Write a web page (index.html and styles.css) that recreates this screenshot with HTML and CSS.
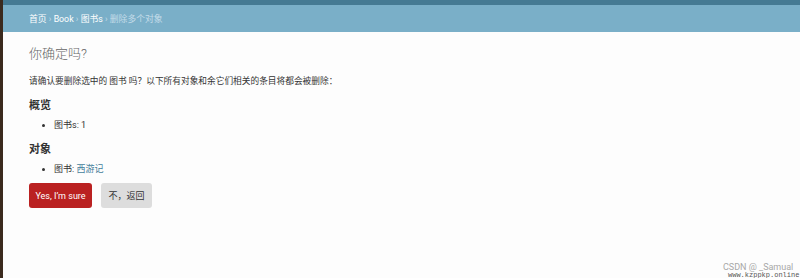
FILE: index.html
```html
<!DOCTYPE html>
<html lang="zh-CN">

<head>
    <meta charset="UTF-8">
    <meta name="viewport" content="width=device-width, initial-scale=1.0">
    <title>你确定吗?</title>
    <link rel="stylesheet" href="styles.css">
</head>

<body>
    <div class="page">
        <div class="edge"></div>
        <div class="main">
            <div class="header"></div>
            <div class="breadcrumbs">
                <a href="#">首页</a> › <a href="#">Book</a> › <a href="#">图书s</a> › <span class="current">删除多个对象</span>
            </div>
            <div class="content">
                <h1>你确定吗?</h1>
                <p class="intro">请确认要删除选中的 图书 吗？以下所有对象和余它们相关的条目将都会被删除：</p>
                <h2>概览</h2>
                <ul>
                    <li>图书s: 1</li>
                </ul>
                <h2>对象</h2>
                <ul>
                    <li>图书: <a href="#">西游记</a></li>
                </ul>
                <div class="actions">
                    <button class="btn-sure">Yes, I’m sure</button>
                    <button class="btn-back">不，返回</button>
                </div>
            </div>
        </div>
        <div class="watermark">
            <span class="wm-csdn">CSDN @ _Samual</span>
            <span class="wm-site">www.kzppkp.online</span>
        </div>
    </div>
</body>

</html>
```

FILE: styles.css
```css
body {
    margin: 0;
    font-family: Roboto, "Noto Sans CJK SC", sans-serif;
    background-color: #fdfdfd;
    color: #333;
}

.page {
    display: flex;
    height: 278px;
    overflow: hidden;
}

.edge {
    width: 3px;
    background-color: #3b2a1e;
}

.main {
    flex: 1;
    display: flex;
    flex-direction: column;
}

.header {
    height: 5px;
    background-color: #457a93;
}

.breadcrumbs {
    height: 27px;
    box-sizing: border-box;
    padding: 8px 26px 0;
    background-color: #7aafc8;
    color: #c4dce8;
    font-size: 8.8px;
    line-height: 12px;
}

.breadcrumbs a {
    color: #fff;
    text-decoration: none;
}

.breadcrumbs .current {
    color: #c4dce8;
}

.content {
    padding: 14px 26px 0;
}

.content h1 {
    margin: 0;
    font-size: 13px;
    line-height: 16px;
    font-weight: 300;
    color: #666;
}

.intro {
    margin: 13px 0 0;
    font-size: 8.7px;
    line-height: 12px;
}

.content h2 {
    margin: 12px 0 0;
    font-size: 11px;
    line-height: 14px;
    font-weight: bold;
    color: #333;
}

.content ul {
    margin: 6px 0 0;
    padding-left: 25px;
    font-size: 9px;
    line-height: 12px;
}

.content ul a {
    color: #447e9b;
    text-decoration: none;
}

.actions {
    display: flex;
    gap: 9px;
    margin-top: 8px;
}

.actions button {
    height: 25px;
    border: none;
    border-radius: 3px;
    font-family: Roboto, "Noto Sans CJK SC", sans-serif;
    font-size: 9px;
    cursor: pointer;
}

.btn-sure {
    width: 63px;
    background-color: #ba2121;
    color: #fff;
}

.btn-back {
    width: 51px;
    background-color: #dddddd;
    color: #333;
}

.watermark {
    position: absolute;
    left: 723px;
    top: 263px;
    display: flex;
    flex-direction: column;
    white-space: nowrap;
}

.wm-csdn {
    font-size: 9px;
    line-height: 9px;
    color: #a8a8a8;
}

.wm-site {
    margin-left: 5px;
    font-family: "Liberation Mono", monospace;
    font-size: 7px;
    line-height: 7px;
    color: #555;
}
```
